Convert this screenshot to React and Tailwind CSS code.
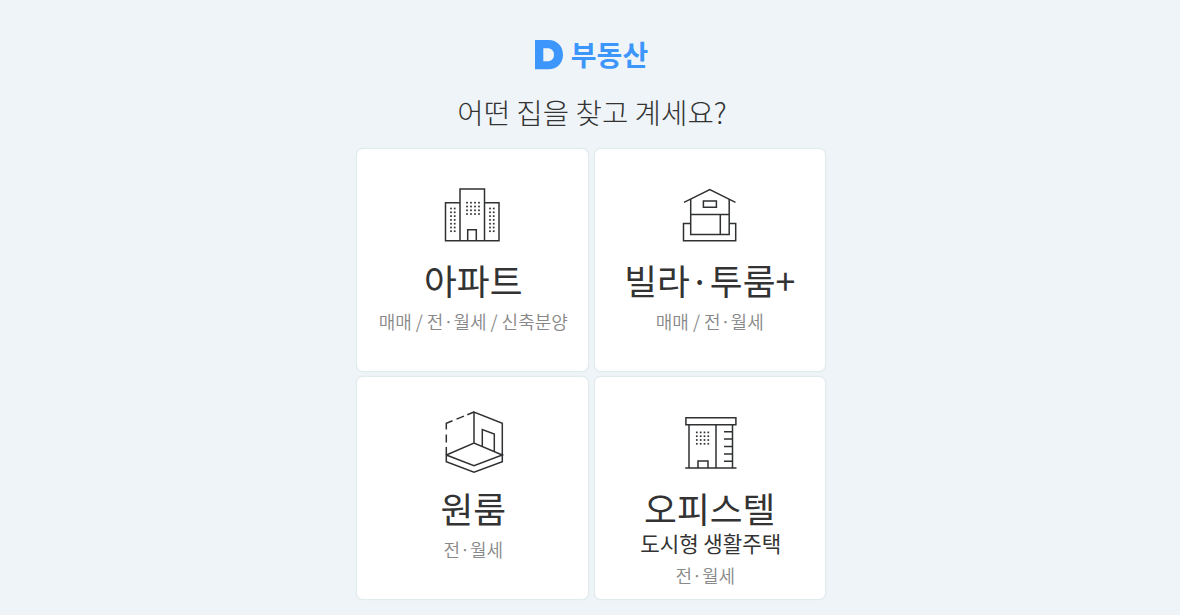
import React from 'react';

const Dots = ({ xs, ys }) => (
  <g fill="#2f3133" stroke="none">
    {ys.map((y) => xs.map((x) => (
      <rect key={`${x}-${y}`} x={x - 0.85} y={y - 0.85} width="1.7" height="1.7" />
    )))}
  </g>
);

const Icon = ({ children }) => (
  <svg
    className="w-[90px] h-[68px] shrink-0"
    viewBox="0 0 90 68"
    fill="none"
    stroke="#2f3133"
    strokeWidth="1.5"
  >
    {children}
  </svg>
);

const ApartmentIcon = () => (
  <Icon>
    <path d="M32 60.7V9h24.5v51.7M32 22.7H17.5v38H71v-38H56.5" />
    <path d="M39.7 60.7v-11h8.6v11" />
    <Dots xs={[39, 43, 47, 51]} ys={[22.7, 26.5, 30.3, 34]} />
    <Dots xs={[23, 26.7]} ys={[28.5, 32.3, 36.1, 39.9, 43.7, 47.5, 51.2]} />
    <Dots xs={[62, 65.7]} ys={[28.5, 32.3, 36.1, 39.9, 43.7, 47.5, 51.2]} />
  </Icon>
);

const VillaIcon = () => (
  <Icon>
    <path d="M19 22.3L44.8 9.6 70.5 22.3" />
    <path d="M25.7 19v35.5h38.5V19M25.7 34.5h38.5M55.3 34.5v20" />
    <path d="M38.4 21h13v6.2h-13z" />
    <path d="M25.7 43.5h-7.2v17.2h52.2V43.5h-6.5" />
  </Icon>
);

const OneRoomIcon = () => (
  <Icon>
    <path d="M46 35V4l28.3 11.2v38.6L46 64.3 18.3 53.8V47L46 35l28.3 12L46 57.8 18.3 47" />
    <path d="M54.3 38.4V21.6l12 4.5v17.3" />
    <path d="M18.3 47v-8M18.3 34.5v-8M18.3 21.5v-6.3l6.2-2.5M28.5 11.1l7.5-3M39.3 6.7L46 4" />
  </Icon>
);

const OfficetelIcon = () => (
  <Icon>
    <path d="M20.9 9.8h50v6.9h-50z" />
    <path d="M24 16.7v43.4M51 16.7v43.4M67.5 16.7v43.4M20.2 60.1h51.3" />
    <path d="M33 60.1v-7h10v7M59 23.7h8.5M59 31.1h8.5M59 38.6h8.5M59 46h8.5M59 53.3h8.5" />
    <Dots xs={[31.8, 35.7, 39.5, 43.3]} ys={[24.4, 28.2, 32, 35.8]} />
  </Icon>
);

const categories = [
  { title: '아파트', desc: '매매 / 전·월세 / 신축분양', icon: ApartmentIcon },
  { title: '빌라·투룸+', desc: '매매 / 전·월세', icon: VillaIcon },
  { title: '원룸', desc: '전·월세', icon: OneRoomIcon },
  { title: '오피스텔', subtitle: '도시형 생활주택', desc: '전·월세', icon: OfficetelIcon },
];

const CategoryCard = ({ category }) => {
  const { title, subtitle, desc, icon: CategoryIcon } = category;

  return (
    <a className="flex flex-col items-center h-[224px] pt-[31px] odd:pl-[2px] bg-white border border-[#e1eaec] rounded-[7px] shadow-[0_0_1px_#dfe8eb] cursor-pointer">
      <CategoryIcon />
      <h2 className="mt-[14px] h-9 text-[35.7px] leading-9 font-normal text-[#333] whitespace-nowrap">{title}</h2>
      {subtitle ? (
        <>
          <p className="mt-[5px] pl-[2px] h-6 text-[21.2px] leading-6 text-[#333] whitespace-nowrap">{subtitle}</p>
          <p className="mt-2 pr-[9px] text-[18px] leading-6 font-[350] text-[#888] whitespace-nowrap">{desc}</p>
        </>
      ) : (
        <p className="mt-[11px] text-[18px] leading-6 font-[350] text-[#888] whitespace-nowrap">{desc}</p>
      )}
    </a>
  );
};

const App = () => {
  return (
    <div className="h-screen overflow-hidden bg-[#eef4f7] font-['Noto_Sans_CJK_KR',sans-serif]">
      <div className="flex flex-col items-center pt-[39px]">
        {/* Logo */}
        <div className="flex items-center h-8 gap-2 ml-[3px]">
          <svg className="w-7 h-[30px]" viewBox="0 0 28 30" fill="#3c96fb">
            <path fillRule="evenodd" d="M0 0h13.5C22 0 28 6.3 28 14.7S22 29.3 13.5 29.3H0zM8.3 8.3v12.9h4.2c3.9 0 6.5-2.6 6.5-6.5s-2.6-6.4-6.5-6.4z" />
          </svg>
          <span className="-mt-[2px] text-[28px] leading-8 font-bold text-[#3c96fb]">부동산</span>
        </div>

        <h1 className="mt-[22px] mb-[17px] ml-1 text-[28.7px] leading-[38px] font-light text-[#333]">어떤 집을 찾고 계세요?</h1>

        {/* Category cards */}
        <div className="grid grid-cols-2 gap-x-[5px] gap-y-1 w-[470px] ml-[2px]">
          {categories.map((category) => (
            <CategoryCard key={category.title} category={category} />
          ))}
        </div>
      </div>
    </div>
  );
};

export default App;
